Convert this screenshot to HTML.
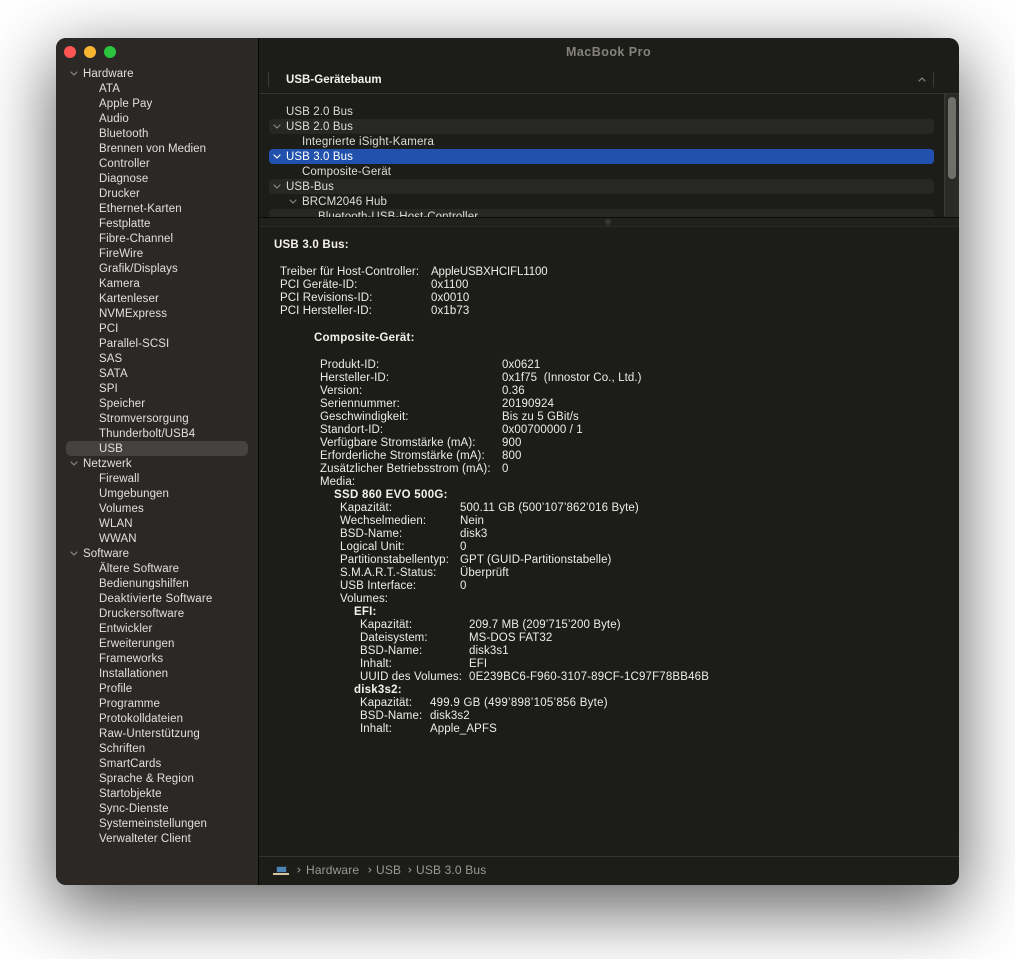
<!DOCTYPE html>
<html><head><meta charset="utf-8"><style>
html,body{margin:0;padding:0;background:#fff;width:1015px;height:959px;overflow:hidden}
body{font-family:"Liberation Sans",sans-serif;font-size:11.5px;position:relative}
#w{position:absolute;left:56px;top:38px;width:903px;height:847px;border-radius:10px;background:#1c1d19;overflow:hidden}
#o{position:absolute;left:56px;top:38px;width:903px;height:847px;border-radius:10px;box-shadow:0 22px 70px 4px rgba(0,0,0,.6)}
#s{position:absolute;left:0;top:0;width:202px;height:847px;background:#2b2826;border-right:1px solid #050505}
.a{position:absolute;white-space:pre;line-height:13px;letter-spacing:.1px;margin-top:1px}
.s{color:#e3e0db}
.t{color:#dedcd5}
.d{color:#eeece6}
.b{font-weight:bold;color:#f4f1e8;letter-spacing:.22px}
.r{position:absolute;border-radius:4px}
svg{position:absolute;overflow:visible}
svg path{fill:none;stroke-linecap:round;stroke-linejoin:round}
</style></head><body>
<div id="o"></div>
<div id="w">
<div id="s"></div>
<div class="r" style="left:8px;top:8px;width:12px;height:12px;border-radius:50%;background:#fd5552"></div>
<div class="r" style="left:28px;top:8px;width:12px;height:12px;border-radius:50%;background:#f9b530"></div>
<div class="r" style="left:48px;top:8px;width:12px;height:12px;border-radius:50%;background:#2ac43f"></div>
<div class="r" style="left:10px;top:403px;width:182px;height:15px;background:#454240;border-radius:5px"></div>

<div class="a" style="left:510px;top:7px;color:#84827a;font-weight:bold;font-size:12.5px;letter-spacing:.47px">MacBook Pro</div>
<div style="position:absolute;left:212px;top:34px;width:1px;height:15px;background:#3a3b36"></div>
<div style="position:absolute;left:877px;top:34px;width:1px;height:15px;background:#3a3b36"></div>
<div class="a b" style="left:230px;top:35px;letter-spacing:.03px">USB-Gerätebaum</div>
<svg style="left:862px;top:39px" width="8" height="5"><path d="M1 4L4 1L7 4" stroke="#8a887f" stroke-width="1.2"/></svg>
<div style="position:absolute;left:203px;top:55px;width:700px;height:1px;background:#33342f"></div>

<div style="position:absolute;left:888px;top:56px;width:15px;height:124px;background:#2a2b26;border-left:1px solid #3a3b36;box-sizing:border-box"></div>
<div class="r" style="left:892px;top:59px;width:8px;height:82px;background:#6f706a"></div>

<div style="position:absolute;left:203px;top:56px;width:685px;height:124px;overflow:hidden">
<div class="r" style="left:10px;top:25px;width:665px;height:15px;background:#272824"></div>
<div class="r" style="left:10px;top:55px;width:665px;height:15px;background:#2251ad"></div>
<div class="r" style="left:10px;top:85px;width:665px;height:15px;background:#272824"></div>
<div class="r" style="left:10px;top:115px;width:665px;height:15px;background:#272824"></div>
<div class="a t" style="left:27px;top:11px">USB 2.0 Bus</div>
<div class="a t" style="left:27px;top:26px">USB 2.0 Bus</div>
<div class="a t" style="left:43px;top:41px;letter-spacing:.17px">Integrierte iSight-Kamera</div>
<div class="a" style="left:27px;top:56px;color:#fff">USB 3.0 Bus</div>
<div class="a t" style="left:43px;top:71px">Composite-Gerät</div>
<div class="a t" style="left:27px;top:86px">USB-Bus</div>
<div class="a t" style="left:43px;top:101px">BRCM2046 Hub</div>
<div class="a t" style="left:59px;top:116px">Bluetooth-USB-Host-Controller</div>
<svg style="left:14px;top:30px" width="8" height="5"><path d="M1 1L4 4L7 1" stroke="#8d8b84" stroke-width="1.1"/></svg>
<svg style="left:14px;top:60px" width="8" height="5"><path d="M1 1L4 4L7 1" stroke="#fff" stroke-width="1.2"/></svg>
<svg style="left:14px;top:90px" width="8" height="5"><path d="M1 1L4 4L7 1" stroke="#8d8b84" stroke-width="1.1"/></svg>
<svg style="left:30px;top:105px" width="8" height="5"><path d="M1 1L4 4L7 1" stroke="#8d8b84" stroke-width="1.1"/></svg>
</div>
<div style="position:absolute;left:203px;top:179px;width:700px;height:10px;background:#20211d;border-top:1px solid #0c0c0a;border-bottom:1px solid #2a2b26;box-sizing:border-box"></div>
<div style="position:absolute;left:549px;top:181px;width:6px;height:6px;border-radius:50%;background:#353631"></div>

<svg style="left:14px;top:33px" width="8" height="5"><path d="M1 1L4 4L7 1" stroke="#8f8c87" stroke-width="1.1"/></svg>
<svg style="left:14px;top:423px" width="8" height="5"><path d="M1 1L4 4L7 1" stroke="#8f8c87" stroke-width="1.1"/></svg>
<svg style="left:14px;top:513px" width="8" height="5"><path d="M1 1L4 4L7 1" stroke="#8f8c87" stroke-width="1.1"/></svg>

<div class="a s" style="left:27px;top:29px">Hardware</div>
<div class="a s" style="left:43px;top:44px">ATA</div>
<div class="a s" style="left:43px;top:59px">Apple Pay</div>
<div class="a s" style="left:43px;top:74px">Audio</div>
<div class="a s" style="left:43px;top:89px">Bluetooth</div>
<div class="a s" style="left:43px;top:104px;letter-spacing:.05px">Brennen von Medien</div>
<div class="a s" style="left:43px;top:119px">Controller</div>
<div class="a s" style="left:43px;top:134px">Diagnose</div>
<div class="a s" style="left:43px;top:149px">Drucker</div>
<div class="a s" style="left:43px;top:164px">Ethernet-Karten</div>
<div class="a s" style="left:43px;top:179px">Festplatte</div>
<div class="a s" style="left:43px;top:194px">Fibre-Channel</div>
<div class="a s" style="left:43px;top:209px">FireWire</div>
<div class="a s" style="left:43px;top:224px">Grafik/Displays</div>
<div class="a s" style="left:43px;top:239px">Kamera</div>
<div class="a s" style="left:43px;top:254px">Kartenleser</div>
<div class="a s" style="left:43px;top:269px">NVMExpress</div>
<div class="a s" style="left:43px;top:284px">PCI</div>
<div class="a s" style="left:43px;top:299px">Parallel-SCSI</div>
<div class="a s" style="left:43px;top:314px">SAS</div>
<div class="a s" style="left:43px;top:329px">SATA</div>
<div class="a s" style="left:43px;top:344px">SPI</div>
<div class="a s" style="left:43px;top:359px">Speicher</div>
<div class="a s" style="left:43px;top:374px">Stromversorgung</div>
<div class="a s" style="left:43px;top:389px">Thunderbolt/USB4</div>
<div class="a s" style="left:43px;top:404px">USB</div>
<div class="a s" style="left:27px;top:419px">Netzwerk</div>
<div class="a s" style="left:43px;top:434px">Firewall</div>
<div class="a s" style="left:43px;top:449px">Umgebungen</div>
<div class="a s" style="left:43px;top:464px">Volumes</div>
<div class="a s" style="left:43px;top:479px">WLAN</div>
<div class="a s" style="left:43px;top:494px">WWAN</div>
<div class="a s" style="left:27px;top:509px">Software</div>
<div class="a s" style="left:43px;top:524px">Ältere Software</div>
<div class="a s" style="left:43px;top:539px">Bedienungshilfen</div>
<div class="a s" style="left:43px;top:554px;letter-spacing:.2px">Deaktivierte Software</div>
<div class="a s" style="left:43px;top:569px">Druckersoftware</div>
<div class="a s" style="left:43px;top:584px">Entwickler</div>
<div class="a s" style="left:43px;top:599px">Erweiterungen</div>
<div class="a s" style="left:43px;top:614px">Frameworks</div>
<div class="a s" style="left:43px;top:629px">Installationen</div>
<div class="a s" style="left:43px;top:644px">Profile</div>
<div class="a s" style="left:43px;top:659px">Programme</div>
<div class="a s" style="left:43px;top:674px">Protokolldateien</div>
<div class="a s" style="left:43px;top:689px;letter-spacing:.15px">Raw-Unterstützung</div>
<div class="a s" style="left:43px;top:704px">Schriften</div>
<div class="a s" style="left:43px;top:719px">SmartCards</div>
<div class="a s" style="left:43px;top:734px">Sprache &amp; Region</div>
<div class="a s" style="left:43px;top:749px">Startobjekte</div>
<div class="a s" style="left:43px;top:764px">Sync-Dienste</div>
<div class="a s" style="left:43px;top:779px">Systemeinstellungen</div>
<div class="a s" style="left:43px;top:794px">Verwalteter Client</div>

<div class="a b" style="left:218px;top:200px">USB 3.0 Bus:</div>
<div class="a d" style="left:224px;top:227px">Treiber für Host-Controller:</div><div class="a d" style="left:375px;top:227px;letter-spacing:-.12px">AppleUSBXHCIFL1100</div>
<div class="a d" style="left:224px;top:240px">PCI Geräte-ID:</div><div class="a d" style="left:375px;top:240px">0x1100</div>
<div class="a d" style="left:224px;top:253px">PCI Revisions-ID:</div><div class="a d" style="left:375px;top:253px">0x0010</div>
<div class="a d" style="left:224px;top:266px">PCI Hersteller-ID:</div><div class="a d" style="left:375px;top:266px">0x1b73</div>
<div class="a b" style="left:258px;top:293px">Composite-Gerät:</div>
<div class="a d" style="left:264px;top:320px">Produkt-ID:</div><div class="a d" style="left:446px;top:320px">0x0621</div>
<div class="a d" style="left:264px;top:333px">Hersteller-ID:</div><div class="a d" style="left:446px;top:333px">0x1f75  (Innostor Co., Ltd.)</div>
<div class="a d" style="left:264px;top:346px">Version:</div><div class="a d" style="left:446px;top:346px">0.36</div>
<div class="a d" style="left:264px;top:359px">Seriennummer:</div><div class="a d" style="left:446px;top:359px">20190924</div>
<div class="a d" style="left:264px;top:372px">Geschwindigkeit:</div><div class="a d" style="left:446px;top:372px">Bis zu 5 GBit/s</div>
<div class="a d" style="left:264px;top:385px">Standort-ID:</div><div class="a d" style="left:446px;top:385px">0x00700000 / 1</div>
<div class="a d" style="left:264px;top:398px">Verfügbare Stromstärke (mA):</div><div class="a d" style="left:446px;top:398px">900</div>
<div class="a d" style="left:264px;top:411px">Erforderliche Stromstärke (mA):</div><div class="a d" style="left:446px;top:411px">800</div>
<div class="a d" style="left:264px;top:424px">Zusätzlicher Betriebsstrom (mA):</div><div class="a d" style="left:446px;top:424px">0</div>
<div class="a d" style="left:264px;top:437px">Media:</div>
<div class="a b" style="left:278px;top:450px;letter-spacing:.3px">SSD 860 EVO 500G:</div>
<div class="a d" style="left:284px;top:463px">Kapazität:</div><div class="a d" style="left:404px;top:463px">500.11 GB (500’107’862’016 Byte)</div>
<div class="a d" style="left:284px;top:476px">Wechselmedien:</div><div class="a d" style="left:404px;top:476px">Nein</div>
<div class="a d" style="left:284px;top:489px">BSD-Name:</div><div class="a d" style="left:404px;top:489px">disk3</div>
<div class="a d" style="left:284px;top:502px">Logical Unit:</div><div class="a d" style="left:404px;top:502px">0</div>
<div class="a d" style="left:284px;top:515px">Partitionstabellentyp:</div><div class="a d" style="left:404px;top:515px">GPT (GUID-Partitionstabelle)</div>
<div class="a d" style="left:284px;top:528px">S.M.A.R.T.-Status:</div><div class="a d" style="left:404px;top:528px">Überprüft</div>
<div class="a d" style="left:284px;top:541px">USB Interface:</div><div class="a d" style="left:404px;top:541px">0</div>
<div class="a d" style="left:284px;top:554px">Volumes:</div>
<div class="a b" style="left:298px;top:567px">EFI:</div>
<div class="a d" style="left:304px;top:580px">Kapazität:</div><div class="a d" style="left:413px;top:580px">209.7 MB (209’715’200 Byte)</div>
<div class="a d" style="left:304px;top:593px">Dateisystem:</div><div class="a d" style="left:413px;top:593px">MS-DOS FAT32</div>
<div class="a d" style="left:304px;top:606px">BSD-Name:</div><div class="a d" style="left:413px;top:606px">disk3s1</div>
<div class="a d" style="left:304px;top:619px">Inhalt:</div><div class="a d" style="left:413px;top:619px">EFI</div>
<div class="a d" style="left:304px;top:632px">UUID des Volumes:</div><div class="a d" style="left:413px;top:632px;letter-spacing:.17px">0E239BC6-F960-3107-89CF-1C97F78BB46B</div>
<div class="a b" style="left:298px;top:645px">disk3s2:</div>
<div class="a d" style="left:304px;top:658px">Kapazität:</div><div class="a d" style="left:374px;top:658px;letter-spacing:.25px">499.9 GB (499’898’105’856 Byte)</div>
<div class="a d" style="left:304px;top:671px">BSD-Name:</div><div class="a d" style="left:374px;top:671px">disk3s2</div>
<div class="a d" style="left:304px;top:684px">Inhalt:</div><div class="a d" style="left:374px;top:684px">Apple_APFS</div>

<div style="position:absolute;left:203px;top:818px;width:700px;height:1px;background:#33342f"></div>
<div style="position:absolute;left:220px;top:828px;width:11px;height:7px;background:#4a85b5;border:1px solid #23303a;box-sizing:border-box"></div>
<div style="position:absolute;left:217px;top:835px;width:16px;height:2px;background:#d9c49f"></div>
<svg style="left:241px;top:829px" width="4" height="6"><path d="M1 1L3 3L1 5" stroke="#8f8f88" stroke-width="1"/></svg>
<div class="a" style="left:250px;top:825px;color:#9a9a93;font-size:12px;letter-spacing:.15px">Hardware</div>
<svg style="left:312px;top:829px" width="4" height="6"><path d="M1 1L3 3L1 5" stroke="#8f8f88" stroke-width="1"/></svg>
<div class="a" style="left:320px;top:825px;color:#9a9a93;font-size:12px;letter-spacing:.15px">USB</div>
<svg style="left:352px;top:829px" width="4" height="6"><path d="M1 1L3 3L1 5" stroke="#8f8f88" stroke-width="1"/></svg>
<div class="a" style="left:360px;top:825px;color:#9a9a93;font-size:12px;letter-spacing:.15px">USB 3.0 Bus</div>
</div>
</body></html>
